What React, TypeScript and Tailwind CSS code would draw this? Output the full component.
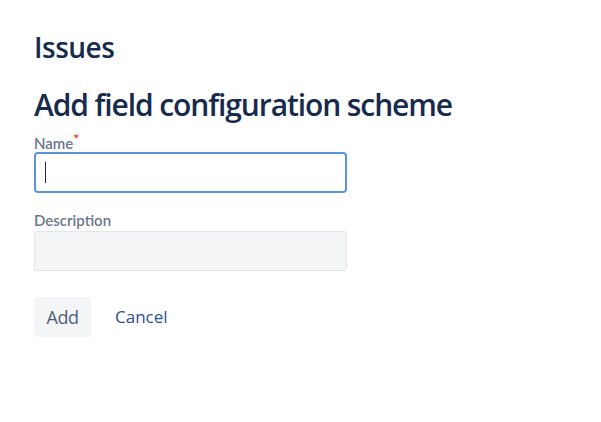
export default function App() {
  return (
    <div className="min-h-[422px] w-[601px] bg-white pl-[34px] pt-[31px] font-['Open_Sans',sans-serif] text-[#172b4d]">
      <h1 className="text-[28px] font-semibold leading-[32px] tracking-[-0.5px]">Issues</h1>
      <h2 className="mt-[24px] text-[30px] font-semibold leading-[36px] tracking-[-1.1px]">
        Add field configuration scheme
      </h2>

      <form className="mt-[12px] w-[313px]">
        {/* Name */}
        <label className="flex font-['Lato',sans-serif] text-[15px] font-semibold leading-[16px] text-[#6b778c]">
          Name<span className="-mt-[3px] text-[14px] leading-[14px] text-[#de350b]">*</span>
        </label>
        <div className="mt-px flex h-[41px] items-center rounded-[4px] border-2 border-[#5a96dc] bg-white pl-[9px]">
          <span className="h-[21px] w-px bg-[#172b4d]" />
        </div>

        {/* Description */}
        <label className="mt-[19px] block font-['Lato',sans-serif] text-[15px] font-semibold leading-[16px] text-[#6b778c]">
          Description
        </label>
        <div className="mt-[3px] h-[40px] rounded-[3px] border border-[#e4e6ea] bg-[#f4f5f7]" />

        {/* Actions */}
        <div className="mt-[26px] flex items-center gap-[12px]">
          <button
            type="button"
            className="h-[40px] w-[57px] rounded-[3px] bg-[#f4f5f7] text-[18px] tracking-[-0.5px] text-[#505f79]"
          >
            Add
          </button>
          <button type="button" className="px-[12px] text-[17px] text-[#2b4f96]">
            Cancel
          </button>
        </div>
      </form>
    </div>
  )
}
